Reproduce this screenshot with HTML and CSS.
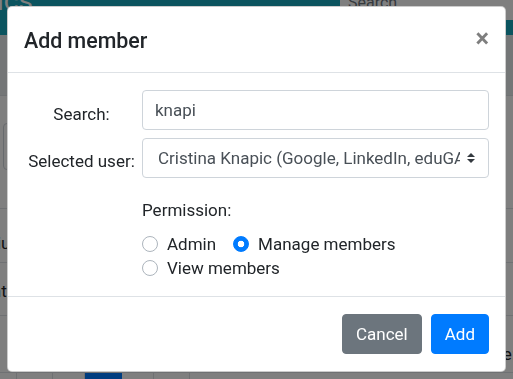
FILE: index.html
```html
<!DOCTYPE html>
<html lang="en">
<head>
<meta charset="utf-8">
<title>Add member</title>
<link rel="stylesheet" href="styles.css">
</head>
<body>
<div class="page">
  <header class="navbar">
    <span class="brand">ics</span>
    <input class="nav-search" type="text" placeholder="Search">
  </header>
  <div class="subbar"></div>
  <main class="content">
    <div class="filter-box"></div>
    <div class="table">
      <div class="trow"><span class="cell-text">(Liu)</span></div>
      <div class="trow second"><span class="cell-text">Contra</span></div>
      <div class="trow third"><span class="right-text">Rows per page:</span></div>
    </div>
    <nav class="pager">
      <span class="pg first"></span>
      <span class="pg"></span>
      <span class="pg"></span>
      <span class="pg active"></span>
      <span class="pg"></span>
      <span class="pg"></span>
    </nav>
  </main>
</div>

<div class="backdrop"></div>

<div class="modal">
  <div class="modal-header">
    <h5 class="modal-title">Add member</h5>
    <button class="close" type="button" aria-label="Close">×</button>
  </div>
  <div class="modal-body">
    <div class="form-row">
      <label class="col-label search-label" for="search">Search:</label>
      <input id="search" class="form-control" type="text" value="knapi">
    </div>
    <div class="form-row">
      <label class="col-label user-label" for="user">Selected user:</label>
      <div class="select-wrap">
        <select id="user" class="custom-select">
          <option>Cristina Knapic (Google, LinkedIn, eduGAIN)</option>
        </select>
        <svg class="select-arrow" width="8" height="10" viewBox="0 0 4 5" aria-hidden="true"><path fill="#343a40" d="M2 0L0 2h4zm0 5L0 3h4z"/></svg>
      </div>
    </div>
    <div class="permission">
      <div class="perm-label">Permission:</div>
      <div class="radios">
        <label class="radio"><input type="radio" name="perm"><span>Admin</span></label>
        <label class="radio"><input type="radio" name="perm" checked><span>Manage members</span></label>
        <label class="radio"><input type="radio" name="perm"><span>View members</span></label>
      </div>
    </div>
  </div>
  <div class="modal-footer">
    <button class="btn btn-secondary" type="button">Cancel</button>
    <button class="btn btn-primary" type="button">Add</button>
  </div>
</div>
</body>
</html>
```

FILE: styles.css
```css
* { box-sizing: border-box; }
html, body { margin: 0; padding: 0; }
body {
  font-family: Roboto, "Noto Sans", "Liberation Sans", sans-serif;
  font-size: 17px;
  line-height: 1.5;
  color: #212529;
  background: #fff;
  width: 513px;
  height: 379px;
  overflow: hidden;
}

/* ---------- page behind the backdrop ---------- */
.page { width: 513px; height: 379px; overflow: hidden; }
.navbar {
  height: 35px;
  background: #16a9be;
  display: flex;
  justify-content: space-between;
  align-items: flex-start;
}
.brand {
  color: #fff;
  font-size: 28px;
  line-height: 1;
  margin-top: -13px;
  margin-left: -3px;
}
.nav-search {
  width: 200px;
  height: 30px;
  margin-top: -10px;
  margin-right: -27px;
  padding: 0 8px 6px;
  border: 0;
  background: #fff;
  font: 16px Roboto, sans-serif;
  color: #495057;
}
.nav-search::placeholder { color: #6c757d; }
.subbar {
  height: 61px;
  background: #e9ecef;
  border-bottom: 1px solid #dee2e6;
}
.content { padding-left: 3px; }
.filter-box {
  margin-top: 27px;
  width: 200px;
  height: 47px;
  border: 1px solid #ced4da;
  border-radius: 4px;
}
.table { margin-top: 38px; margin-left: -3px; }
.trow {
  height: 54px;
  border-top: 1px solid #dee2e6;
  padding-top: 22px;
  display: flex;
}
.trow.second { height: 53px; padding-top: 16px; }
.trow.third { height: 57px; padding-top: 26px; }
.cell-text { margin-left: -18px; }
.trow.second .cell-text { margin-left: -29px; }
.right-text { margin-left: auto; margin-right: -3px; }
.pager {
  display: flex;
  border-top: 1px solid #dee2e6;
  height: 10px;
  margin-left: -3px;
}
.pg { height: 10px; border-right: 1px solid #dee2e6; width: 36px; }
.pg.first { width: 17px; }
.pg:nth-child(3) { width: 32px; }
.pg.active { width: 37px; background: #007bff; border-color: #007bff; }
.pg:nth-child(5) { width: 32px; }

/* ---------- backdrop ---------- */
.backdrop {
  position: fixed;
  inset: 0;
  background: rgba(0, 0, 0, 0.5);
}

/* ---------- modal ---------- */
.modal {
  position: fixed;
  top: 6px;
  left: 7px;
  width: 499px;
  background: #fff;
  border: 1px solid rgba(0, 0, 0, 0.2);
  border-radius: 5px;
  display: flex;
  flex-direction: column;
}
.modal-header {
  display: flex;
  justify-content: space-between;
  align-items: flex-start;
  padding: 19px 16px 16px;
  border-bottom: 1px solid #dee2e6;
}
.modal-title {
  margin: 0;
  font-size: 21.4px;
  font-weight: 500;
  line-height: 30px;
}
.close {
  padding: 0;
  margin: 0;
  border: 0;
  background: transparent;
  font-family: Roboto, sans-serif;
  font-size: 25.6px;
  font-weight: 700;
  line-height: 24px;
  color: #000;
  opacity: 0.5;
}

.modal-body { padding: 17px 16px 16px; }
.form-row {
  display: grid;
  grid-template-columns: 118px 1fr;
  align-items: start;
}
.form-row + .form-row { margin-top: 8px; }
.col-label {
  text-align: center;
  padding-right: 3px;
  line-height: 24px;
}
.search-label { padding-top: 12px; }
.user-label { padding-top: 11px; }
.form-control, .custom-select {
  display: block;
  width: 100%;
  height: 40px;
  padding: 6px 12px;
  font-family: inherit;
  font-size: 17px;
  line-height: 26px;
  color: #495057;
  background: #fff;
  border: 1px solid #ced4da;
  border-radius: 4px;
}
.select-wrap { position: relative; }
.custom-select {
  appearance: none;
  -webkit-appearance: none;
  padding-left: 15px;
  padding-right: 28px;
}
.select-arrow {
  position: absolute;
  right: 14px;
  top: 15px;
  pointer-events: none;
}

.permission { margin-left: 118px; margin-top: 20px; }
.perm-label { line-height: 24px; }
.radios {
  display: flex;
  flex-wrap: wrap;
  margin-top: 10px;
}
.radio {
  display: inline-flex;
  align-items: center;
  height: 24px;
  margin-right: 17px;
  line-height: 24px;
}
.radio input {
  appearance: none;
  -webkit-appearance: none;
  width: 16px;
  height: 16px;
  margin: 0 9px 0 0;
  border: 1px solid #adb5bd;
  border-radius: 50%;
  background: #fff;
}
.radio input:checked {
  border-color: #007bff;
  background: radial-gradient(circle, #fff 0 3px, #007bff 3.6px);
}

.modal-footer {
  display: flex;
  justify-content: flex-end;
  align-items: center;
  padding: 13px 12px 13px;
  border-top: 1px solid #dee2e6;
}
.btn {
  margin: 4px;
  padding: 6px 13px;
  font-family: inherit;
  font-size: 17px;
  line-height: 26px;
  color: #fff;
  border: 1px solid transparent;
  border-radius: 4px;
}
.btn + .btn { margin-left: 5px; }
.btn-secondary { background: #6c757d; border-color: #6c757d; }
.btn-primary { background: #007bff; border-color: #007bff; }
```
